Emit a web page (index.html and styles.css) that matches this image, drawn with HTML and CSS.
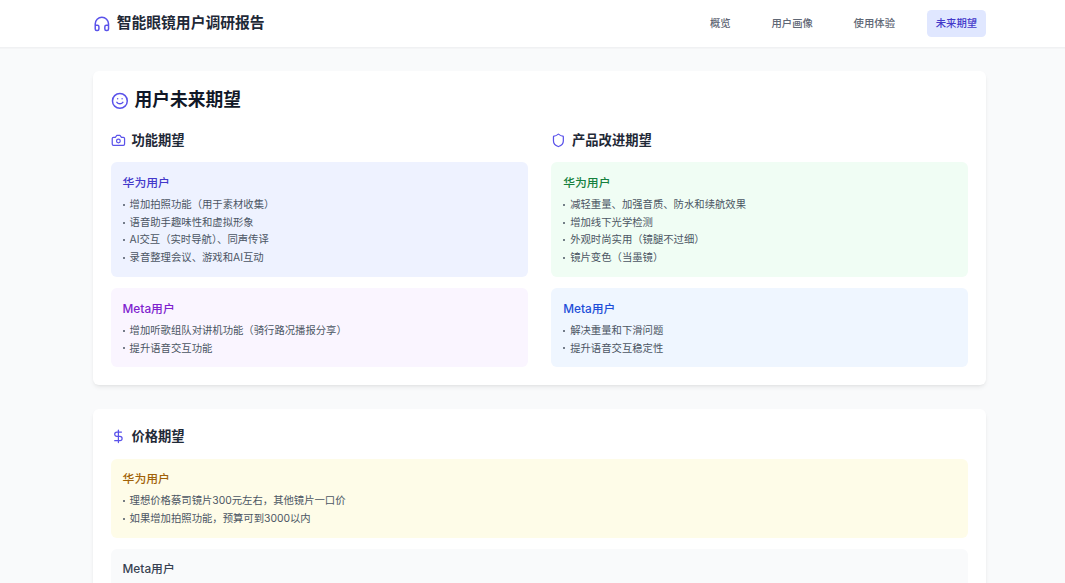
FILE: index.html
```html
<!DOCTYPE html>
<html lang="zh-CN">
<head>
<meta charset="utf-8">
<title>智能眼镜用户调研报告</title>
<link rel="stylesheet" href="styles.css">
</head>
<body>
<header class="topbar">
  <div class="topbar-inner">
    <div class="brand">
      <svg class="icon icon-lg" viewBox="0 0 24 24"><path d="M3 14h3a2 2 0 0 1 2 2v3a2 2 0 0 1-2 2H5a2 2 0 0 1-2-2v-7a9 9 0 0 1 18 0v7a2 2 0 0 1-2 2h-1a2 2 0 0 1-2-2v-3a2 2 0 0 1 2-2h3"/></svg>
      <span class="brand-name">智能眼镜用户调研报告</span>
    </div>
    <nav class="nav">
      <a class="nav-item">概览</a>
      <a class="nav-item">用户画像</a>
      <a class="nav-item">使用体验</a>
      <a class="nav-item nav-active">未来期望</a>
    </nav>
  </div>
</header>
<main class="page">
  <section class="card">
    <h1 class="card-title">
      <svg class="icon icon-lg" viewBox="0 0 24 24"><circle cx="12" cy="12" r="10"/><path d="M8 14s1.500 2 4 2 4-2 4-2"/><path d="M9 9h.01"/><path d="M15 9h.01"/></svg>
      用户未来期望
    </h1>
    <div class="columns">
      <div class="column">
        <h2 class="section-title">
          <svg class="icon icon-md" viewBox="0 0 24 24"><path d="M14.500 4h-5L7 7H4a2 2 0 0 0-2 2v9a2 2 0 0 0 2 2h16a2 2 0 0 0 2-2V9a2 2 0 0 0-2-2h-3l-2.500-3z"/><circle cx="12" cy="13" r="3"/></svg>
          功能期望
        </h2>
        <div class="stack">
          <div class="box box-indigo">
            <h3 class="box-title">华为用户</h3>
            <ul class="list">
              <li>增加拍照功能（用于素材收集）</li>
              <li>语音助手趣味性和虚拟形象</li>
              <li>AI交互（实时导航）、同声传译</li>
              <li>录音整理会议、游戏和AI互动</li>
            </ul>
          </div>
          <div class="box box-purple">
            <h3 class="box-title">Meta用户</h3>
            <ul class="list">
              <li>增加听歌组队对讲机功能（骑行路况播报分享）</li>
              <li>提升语音交互功能</li>
            </ul>
          </div>
        </div>
      </div>
      <div class="column">
        <h2 class="section-title">
          <svg class="icon icon-md" viewBox="0 0 24 24"><path d="M20 13c0 5-3.500 7.500-7.660 8.950a1 1 0 0 1-.67-.01C7.500 20.500 4 18 4 13V6a1 1 0 0 1 1-1c2 0 4.500-1.200 6.240-2.720a1.170 1.170 0 0 1 1.520 0C14.510 3.810 17 5 19 5a1 1 0 0 1 1 1z"/></svg>
          产品改进期望
        </h2>
        <div class="stack">
          <div class="box box-green">
            <h3 class="box-title">华为用户</h3>
            <ul class="list">
              <li>减轻重量、加强音质、防水和续航效果</li>
              <li>增加线下光学检测</li>
              <li>外观时尚实用（镜腿不过细）</li>
              <li>镜片变色（当墨镜）</li>
            </ul>
          </div>
          <div class="box box-blue">
            <h3 class="box-title">Meta用户</h3>
            <ul class="list">
              <li>解决重量和下滑问题</li>
              <li>提升语音交互稳定性</li>
            </ul>
          </div>
        </div>
      </div>
    </div>
  </section>
  <section class="card">
    <h2 class="section-title">
      <svg class="icon icon-md" viewBox="0 0 24 24"><path d="M12 2v20"/><path d="M17 5H9.500a3.500 3.500 0 0 0 0 7h5a3.500 3.500 0 0 1 0 7H6"/></svg>
      价格期望
    </h2>
    <div class="stack">
      <div class="box box-yellow">
        <h3 class="box-title">华为用户</h3>
        <ul class="list">
          <li>理想价格蔡司镜片300元左右，其他镜片一口价</li>
          <li>如果增加拍照功能，预算可到3000以内</li>
        </ul>
      </div>
      <div class="box box-gray">
        <h3 class="box-title">Meta用户</h3>
      </div>
    </div>
  </section>
</main>
</body>
</html>
```
FILE: styles.css
```css
* { box-sizing: border-box; }
html, body { margin: 0; height: 100%; overflow: hidden; }
body {
  background: #f9fafb;
  color: #111827;
  font-family: Inter, "Noto Sans CJK SC", "Noto Sans", sans-serif;
}
h1, h2, h3, ul { margin: 0; padding: 0; }

.icon {
  flex: none;
  fill: none;
  stroke: #5a52ea;
  stroke-width: 2;
  stroke-linecap: round;
  stroke-linejoin: round;
}
.icon-lg { width: 17.75px; height: 17.75px; }
.icon-md { width: 14.8px; height: 14.8px; }

.topbar {
  height: 48px;
  background: #fff;
  border-bottom: 1px solid #f0f1f3;
  box-shadow: 0 1px 1px rgba(0, 0, 0, .02);
}
.topbar-inner {
  height: 47px;
  padding: 0 79px 0 93px;
  display: flex;
  align-items: center;
  justify-content: space-between;
}
.brand { display: flex; align-items: center; gap: 5.900px; }
.brand-name { font-size: 14.800px; font-weight: 600; line-height: 20.700px; color: #1f2937; }
.nav { display: flex; gap: 23px; }
.nav-item {
  padding: 5.900px 8.880px;
  border-radius: 4.440px;
  font-size: 10.350px;
  font-weight: 500;
  line-height: 14.800px;
  color: #5f6775;
}
.nav-active { background: #e0e7ff; color: #4338ca; }

.page {
  padding: 22.700px 79px 0 93px;
  display: flex;
  flex-direction: column;
  gap: 24.500px;
}
.card {
  background: #fff;
  border-radius: 5.900px;
  padding: 17.750px;
  box-shadow: 0 3px 5px -1px rgba(0, 0, 0, .08), 0 1px 3px -1px rgba(0, 0, 0, .06);
}
.card-title {
  display: flex;
  align-items: center;
  gap: 5.900px;
  margin-bottom: 17.750px;
  font-size: 17.750px;
  font-weight: 600;
  line-height: 24.500px;
  color: #111827;
}
.columns { display: grid; grid-template-columns: 1fr 1fr; gap: 23.670px; }
.section-title {
  display: flex;
  align-items: center;
  gap: 5.900px;
  margin-bottom: 12.500px;
  font-size: 13.310px;
  font-weight: 600;
  line-height: 19px;
  color: #1f2937;
}
.stack { display: flex; flex-direction: column; gap: 11.400px; }
.box { border-radius: 5.900px; padding: 12.500px 11.830px 9.750px; }
.box-title { font-size: 11.830px; font-weight: 500; line-height: 17.750px; margin-bottom: 3.500px; }
.list { list-style: none; }
.list li {
  display: flex;
  align-items: center;
  gap: 5px;
  font-size: 10.350px;
  line-height: 17.750px;
  color: #4b5563;
}
.list li::before {
  content: "";
  flex: none;
  width: 2px;
  height: 2px;
  border-radius: 50%;
  background: #4b5563;
}
.box-indigo { background: #eef2ff; }
.box-indigo .box-title { color: #4338ca; }
.box-purple { background: #faf5ff; }
.box-purple .box-title { color: #7e22ce; }
.box-green { background: #f0fdf4; }
.box-green .box-title { color: #15803d; }
.box-blue { background: #eff6ff; }
.box-blue .box-title { color: #1d4ed8; }
.box-yellow { background: #fefce8; }
.box-yellow .box-title { color: #a16207; }
.box-gray { background: #f9fafb; }
.box-gray .box-title { color: #374151; }
```
